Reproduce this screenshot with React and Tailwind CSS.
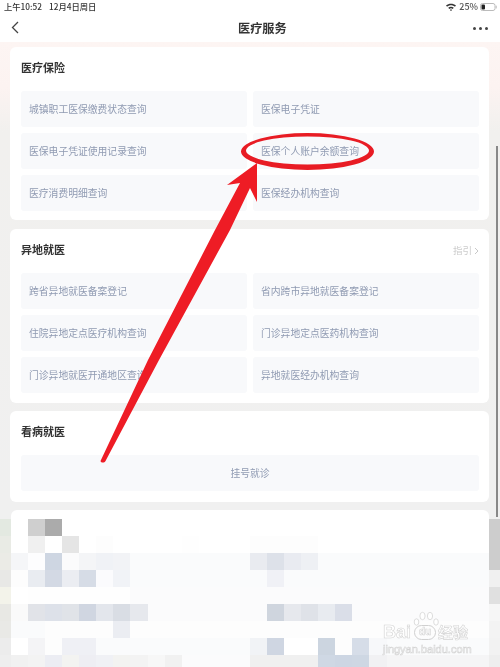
const FONT = { fontFamily: '"Noto Sans CJK SC", "Liberation Sans", sans-serif' };

const W = "#ffffff";
const M = "#fbfbfc";
function row(gutterL, gutterR, base, over) {
  const cells = Array.from({ length: 28 }, (_, i) => over[i] || base);
  return { gutterL, gutterR, cells };
}
const mosaic = [
  row("#e3e9e1", "#cdcdcd", W, { 1: "#cfcfcf", 2: "#ababab" }),
  row("#e9ebe5", "#cdcdcd", W, { 1: "#f0f0f0", 3: "#e5e5e5", 5: "#fdfdfd", 10: "#fefefe", 14: "#fdfdfd", 15: "#fdfdfd", 16: "#fdfdfd", 17: "#fdfdfd" }),
  row("#ebebe6", "#cdcdcd", "#fafbfc", { 0: "#f5f6f8", 1: "#fdfdfe", 2: "#ced6e2", 3: "#fbfbfc", 4: "#f4f5f7", 5: "#f0f2f6", 6: "#f2f3f6", 14: "#e9ebf0", 15: "#dde1e9", 16: "#e9ebf1", 17: "#eef0f4" }),
  row("#e8e8e6", "#f0f0f0", "#fafbfc", { 0: "#fdfdfd", 1: "#e9ecf1", 2: "#d3d9e4", 3: "#ebedf2", 4: "#d6dce6", 5: "#fbfbfd", 6: "#f1f3f7", 15: "#f0f1f6" }),
  row("#f3f3ea", "#e0e0e0", M, { 0: W, 1: "#fefefe", 2: "#fefefe", 3: "#fefefe", 4: "#fefefe", 5: "#fefefe", 6: "#fefefe" }),
  row("#e8e8e4", "#f6f6f6", M, { 0: "#fafafa", 1: "#e1e3e8", 2: "#dde1e9", 3: "#e0e3e8", 4: "#d0d6e1", 5: "#e3e6ec", 6: "#d9dde4", 7: "#e6e8ed", 15: "#cfd5de", 16: "#e6e8ed", 17: "#dfe2e8", 18: "#e8ebf0", 19: "#dadee8" }),
  row("#e9e9e6", "#f3f3f3", "#fdfdfd", { 0: "#fafbfc", 1: "#fafbfc", 6: "#ebedf2" }),
  row("#ececec", "#f2f2f2", "#fafbfc", { 0: W, 1: "#f4f4f6", 2: "#fdfdfd", 3: "#eff0f5", 4: "#eff0f5", 14: "#f1f3f6", 15: "#cfd6e2", 16: W, 17: W, 18: "#ccd5e0", 19: "#fdfdfd", 20: "#d6dde8", 21: "#f7f8fa" }),
  row("#eeeeee", "#eeeeee", "#f5f5f6", { 0: "#f1f1f1", 1: "#f3f3f3", 2: "#ecedf3", 3: "#f3f3f1", 4: "#eeeef3", 5: "#f0f1f5", 6: "#f3f3f1", 7: "#f3f3f3", 8: "#f7f7f7", 9: "#f1f1f1", 10: "#fbfbfc", 11: "#fbfbfc", 12: "#fbfbfc", 13: "#fbfbfc", 14: "#f0f0f0", 15: "#f0f0f0", 16: "#f0f0f0", 17: "#f0f0f0", 18: "#cfd8e4", 19: "#cdd6e3", 20: "#ced7e3", 21: "#f1f1f3" }),
];

function Tile({ children, center }) {
  return (
    <div className={`h-[36px] pt-[2px] rounded-[3px] bg-[#f8f9fb] flex items-center text-[9.8px] leading-none text-[#8f9ab2] ${center ? "justify-center" : "pl-[8px]"}`}>
      {children}
    </div>
  );
}

function Card({ title, extra, items, className, single }) {
  return (
    <section className={`ml-[10px] mr-[11px] bg-white rounded-[6px] pl-[11px] pr-[10px] ${className}`}>
      <div className="h-[44px] flex items-center justify-between">
        <h2 className="text-[11px] leading-none font-semibold text-[#333333] mt-[-4px]">{title}</h2>
        {extra}
      </div>
      {single ? (
        <Tile center>{single}</Tile>
      ) : (
        <div className="grid grid-cols-2 gap-[6px]">
          {items.map((t) => (
            <Tile key={t}>{t}</Tile>
          ))}
        </div>
      )}
    </section>
  );
}

export default function App() {
  return (
    <div style={FONT} className="relative w-[500px] h-[667px] overflow-hidden bg-[#f0f0f0] blur-[0.4px]">
      <header className="h-[42px] bg-white">
        <div className="h-[13px] flex items-center pl-[4px] pr-[3px] text-[8.3px] leading-none text-[#333333] font-medium">
          <span>上午10:52</span>
          <span className="ml-[7px]">12月4日周日</span>
          <svg className="ml-auto" width="10" height="8" viewBox="0 0 10 8" aria-hidden="true">
            <path d="M0 2.6C2.8 0 7.2 0 10 2.6L8.9 3.8C6.6 1.8 3.4 1.8 1.1 3.8ZM2.2 4.8C3.8 3.4 6.2 3.4 7.8 4.8L6.7 6C5.700 5.100 4.300 5.100 3.300 6ZM5 8L3.900 6.900C4.500 6.400 5.500 6.400 6.100 6.900Z" fill="#333333" />
          </svg>
          <span className="ml-[3px] text-[9px] text-[#555555]">25%</span>
          <svg className="ml-[2px]" width="17" height="8" viewBox="0 0 17 8" aria-hidden="true">
            <rect x="0.5" y="0.5" width="14.5" height="7" rx="2" fill="none" stroke="#bbbbbb" />
            <rect x="1.5" y="1.5" width="3.5" height="5" rx="1" fill="#222222" />
            <rect x="15.7" y="2.5" width="1" height="3" rx="0.5" fill="#bbbbbb" />
          </svg>
        </div>
        <div className="h-[29px] flex items-center pl-[11px]">
          <svg width="8" height="13" viewBox="0 0 8 13" aria-hidden="true">
            <path d="M7 1L1.500 6.500L7 12" fill="none" stroke="#444444" strokeWidth="1.3" />
          </svg>
          <h1 className="ml-[219px] pt-[2px] text-[12.2px] leading-none font-semibold text-[#333333]">医疗服务</h1>
          <div className="ml-[186px] pt-[1px] flex gap-[3px]">
            <i className="block w-[3px] h-[3px] rounded-full bg-[#444444]" />
            <i className="block w-[3px] h-[3px] rounded-full bg-[#444444]" />
            <i className="block w-[3px] h-[3px] rounded-full bg-[#444444]" />
          </div>
        </div>
      </header>

      <main className="h-[468px] pt-[5px] flex flex-col bg-[linear-gradient(180deg,#fdf5f3_0px,#fcf3f1_45px,#f1f0ee_90px,#f0f0f0_468px)]">
        <Card
          title="医疗保险"
          className="h-[173px]"
          items={["城镇职工医保缴费状态查询", "医保电子凭证", "医保电子凭证使用记录查询", "医保个人账户余额查询", "医疗消费明细查询", "医保经办机构查询"]}
        />
        <Card
          title="异地就医"
          className="h-[174px] mt-[9px]"
          extra={
            <span className="flex items-center gap-[2px] text-[9.5px] leading-none text-[#cccccc]">
              指引
              <svg width="5" height="8" viewBox="0 0 5 8" aria-hidden="true">
                <path d="M1 1L4 4L1 7" fill="none" stroke="#c8c8c8" strokeWidth="1" />
              </svg>
            </span>
          }
          items={["跨省异地就医备案登记", "省内跨市异地就医备案登记", "住院异地定点医疗机构查询", "门诊异地定点医药机构查询", "门诊异地就医开通地区查询", "异地就医经办机构查询"]}
        />
        <Card title="看病就医" single="挂号就诊" className="h-[91px] mt-[8px]" />
      </main>

      <div className="ml-[11px] mr-[11px] h-[9px] bg-white rounded-t-[6px]" />
      <div className="flex flex-col">
        {mosaic.map((r, i) => (
          <div key={i} className="h-[17px] grid grid-cols-[11px_repeat(28,1fr)_11px]">
            <div style={{ background: r.gutterL }} />
            {r.cells.map((c, j) => (
              <div key={j} style={{ background: c }} />
            ))}
            <div style={{ background: r.gutterR }} />
          </div>
        ))}
      </div>

      <div className="absolute left-[496px] top-[146px] w-[2px] h-[371px] bg-[#888888]" />

      <svg className="absolute left-0 top-0 pointer-events-none" width="500" height="667" viewBox="0 0 500 667" aria-hidden="true">
        <path
          fillRule="evenodd"
          fill="#e81c24"
          d="M241 151.500A66.500 18.500 0 1 0 374 151.500A66.500 18.500 0 1 0 241 151.500ZM246 150.500A61.500 14 0 1 1 369 150.500A61.500 14 0 1 1 246 150.500Z"
        />
        <path
          fill="#ee1c25"
          d="M257 163L257 202L250 188L230 230L159 360L105.500 461C104.500 463 101 463 100.500 461L148 360L215 230L240 183L227 185Z"
        />
      </svg>

      <div className="absolute left-[383px] top-[622px] w-[92px] text-[#ffffff] [-webkit-text-stroke:0.6px_#d4d4d4]" style={{ fontFamily: '"Liberation Sans", "Noto Sans CJK SC", sans-serif' }}>
        <div className="flex items-center h-[20px] text-[18px] leading-none font-bold">
          <span>Bai</span>
          <span className="ml-[3px] w-[22px] h-[15px] rounded-full border border-[#d0d0d0] flex items-center justify-center text-[10px]">du</span>
          <span className="ml-[2px] text-[15px] whitespace-nowrap">经验</span>
        </div>
        <div className="mt-[2px] text-[11px] leading-none whitespace-nowrap">jingyan.baidu.com</div>
      </div>
      <svg className="absolute left-[413px] top-[611px]" width="27" height="18" viewBox="0 0 27 18" aria-hidden="true">
        <g fill="#ffffff" stroke="#d4d4d4" strokeWidth="0.8">
          <ellipse cx="3.500" cy="11" rx="2.300" ry="3.200" />
          <ellipse cx="9.500" cy="5" rx="2.600" ry="3.700" />
          <ellipse cx="17" cy="5" rx="2.600" ry="3.700" />
          <ellipse cx="23" cy="11" rx="2.300" ry="3.200" />
        </g>
      </svg>
    </div>
  );
}
